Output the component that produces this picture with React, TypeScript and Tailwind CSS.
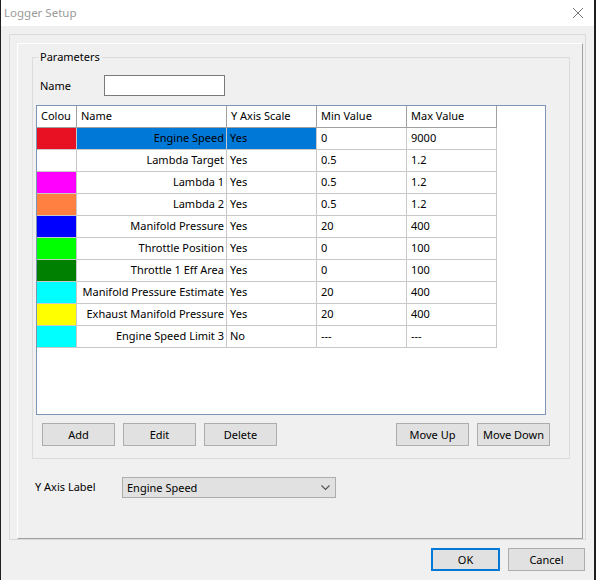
import React from "react";

const font = "font-['Noto_Sans',sans-serif] text-[11px] leading-none";

type Row = { color: string; name: string; scale: string; min: string; max: string; selected?: boolean };

const rows: Row[] = [
  { color: "bg-[#e81123]", name: "Engine Speed", scale: "Yes", min: "0", max: "9000", selected: true },
  { color: "bg-white", name: "Lambda Target", scale: "Yes", min: "0.5", max: "1.2" },
  { color: "bg-[#ff00ff]", name: "Lambda 1", scale: "Yes", min: "0.5", max: "1.2" },
  { color: "bg-[#ff8040]", name: "Lambda 2", scale: "Yes", min: "0.5", max: "1.2" },
  { color: "bg-[#0000ff]", name: "Manifold Pressure", scale: "Yes", min: "20", max: "400" },
  { color: "bg-[#00ff00]", name: "Throttle Position", scale: "Yes", min: "0", max: "100" },
  { color: "bg-[#008000]", name: "Throttle 1 Eff Area", scale: "Yes", min: "0", max: "100" },
  { color: "bg-[#00ffff]", name: "Manifold Pressure Estimate", scale: "Yes", min: "20", max: "400" },
  { color: "bg-[#ffff00]", name: "Exhaust Manifold Pressure", scale: "Yes", min: "20", max: "400" },
  { color: "bg-[#00ffff]", name: "Engine Speed Limit 3", scale: "No", min: "---", max: "---" },
];

const Button: React.FC<{ w: string; children: React.ReactNode; primary?: boolean }> = ({ w, children, primary }) => (
  <button
    className={`${w} h-[23px] bg-[#e1e1e1] flex items-center justify-center text-black pb-px ${
      primary ? "border-2 border-[#0078d7]" : "border border-[#adadad]"
    }`}
  >
    {children}
  </button>
);

const ParamTable: React.FC = () => (
  <div className="ml-[3px] mt-[9px] w-[510px] h-[310px] border border-[#7a96b4] bg-white overflow-hidden">
    <div className="flex h-[22px] border-b border-[#a0a0a0] w-[460px]">
      <div className="w-[40px] border-r border-[#a0a0a0] pl-[4px] pb-[2px] flex items-center overflow-hidden whitespace-nowrap">Colou</div>
      <div className="w-[150px] border-r border-[#a0a0a0] pl-[4px] pb-[2px] flex items-center">Name</div>
      <div className="w-[90px] border-r border-[#a0a0a0] pl-[4px] pb-[2px] flex items-center">Y Axis Scale</div>
      <div className="w-[90px] border-r border-[#a0a0a0] pl-[4px] pb-[2px] flex items-center">Min Value</div>
      <div className="w-[90px] border-r border-[#a0a0a0] pl-[4px] pb-[2px] flex items-center">Max Value</div>
    </div>
    {rows.map((r, i) => (
      <div key={i} className="flex h-[22px] w-[460px] border-b border-[#c8c8c8]">
        <div className={`w-[40px] border-r border-[#c8c8c8] ${r.color}`} />
        <div
          className={`w-[150px] border-r border-[#c8c8c8] pr-[2px] pb-[2px] flex items-center justify-end whitespace-nowrap ${
            r.selected ? "bg-[#0078d7]" : ""
          }`}
        >
          {r.name}
        </div>
        <div className={`w-[90px] border-r border-[#c8c8c8] pl-[3px] pb-[2px] flex items-center ${r.selected ? "bg-[#0078d7]" : ""}`}>
          {r.scale}
        </div>
        <div className="w-[90px] border-r border-[#c8c8c8] pl-[4px] pb-[2px] flex items-center">{r.min}</div>
        <div className="w-[90px] border-r border-[#c8c8c8] pl-[4px] pb-[2px] flex items-center">{r.max}</div>
      </div>
    ))}
  </div>
);

export default function App() {
  return (
    <div className={`w-[596px] h-[580px] bg-[#1f1f1f] flex overflow-hidden text-black ${font}`}>
      <div className="ml-px w-[593px] flex flex-col">
        {/* title bar */}
        <div className="h-[26px] bg-white flex items-center">
          <span className="pl-[3px] flex-1 text-[#9a9a9a] text-[11.5px]">Logger Setup</span>
          <div className="w-[32px] h-[26px] flex items-center justify-center">
            <svg width="12" height="12" viewBox="0 0 12 12">
              <path d="M1 1L11 11M11 1L1 11" stroke="#7a7a7a" strokeWidth="1" />
            </svg>
          </div>
        </div>

        {/* body */}
        <div className="flex-1 bg-[#f0f0f0] px-[8px] pt-[8px] flex flex-col">
          <div className="h-[506px] border border-[#dadada] pt-[8px] pl-[7px] pr-[2px] flex">
            <div className="flex-1 border border-white border-r-[#a0a0a0] border-b-[#a0a0a0] flex flex-col">
              {/* Parameters group */}
              <div className="relative ml-[14px] mt-[13px] w-[538px] h-[402px] border border-[#dcdcdc] flex flex-col">
                <span className="absolute -top-[7px] left-[5px] px-[2px] bg-[#f0f0f0]">Parameters</span>
                <div className="flex items-center mt-[17px] pl-[7px]">
                  <span className="w-[64px]">Name</span>
                  <div className="w-[121px] h-[21px] bg-white border border-[#7a7a7a]" />
                </div>
                <ParamTable />
                <div className="flex mt-[8px] pl-[9px] pr-[19px] gap-[8px]">
                  <Button w="w-[73px]">Add</Button>
                  <Button w="w-[73px]">Edit</Button>
                  <Button w="w-[73px]">Delete</Button>
                  <div className="ml-auto flex gap-[8px]">
                    <Button w="w-[73px]">Move Up</Button>
                    <Button w="w-[73px]">Move Down</Button>
                  </div>
                </div>
              </div>

              {/* Y axis label */}
              <div className="flex items-center mt-[18px] pl-[17px]">
                <span className="w-[87px] -mt-[2px]">Y Axis Label</span>
                <div className="w-[214px] h-[21px] bg-[#e1e1e1] border border-[#adadad] flex items-center pl-[4px] pr-[5px]">
                  <span className="flex-1">Engine Speed</span>
                  <svg width="9" height="6" viewBox="0 0 9 6">
                    <path d="M0.5 0.5L4.5 4.5L8.5 0.5" stroke="#555" strokeWidth="1.2" fill="none" />
                  </svg>
                </div>
              </div>
            </div>
          </div>

          {/* bottom buttons */}
          <div className="flex justify-end gap-[8px] mt-[8px] mr-px">
            <Button w="w-[69px]" primary>
              OK
            </Button>
            <Button w="w-[77px]">Cancel</Button>
          </div>
        </div>
      </div>
    </div>
  );
}
